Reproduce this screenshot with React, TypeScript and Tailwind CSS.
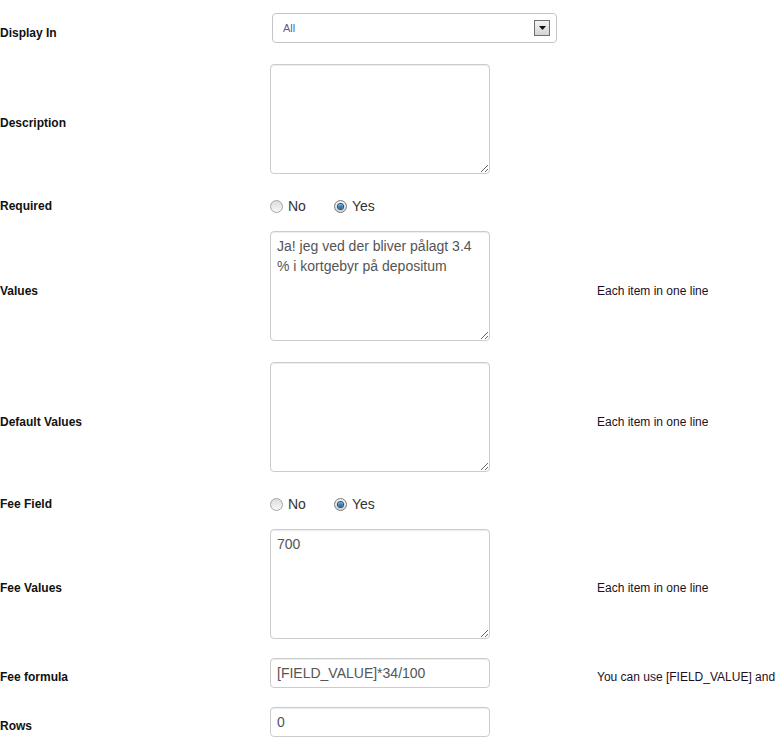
import type { ReactNode } from "react";

const font = { fontFamily: '"Liberation Sans", Arial, sans-serif' };

function Radio({ checked, label }: { checked?: boolean; label: string }) {
  return (
    <label className="flex items-center gap-[5px] text-[14px] text-[#333]">
      {checked ? (
        <span className="flex h-[13px] w-[13px] items-center justify-center rounded-full border border-[#7a7a7a] bg-gradient-to-b from-[#f2f2f2] to-[#d6d6d6]">
          <span className="h-[5px] w-[5px] rounded-full bg-gradient-to-b from-[#5fb0e6] to-[#1d5f92] ring-1 ring-[#1b4f78]" />
        </span>
      ) : (
        <span className="h-[13px] w-[13px] rounded-full border border-[#a5a5a5] bg-gradient-to-b from-[#dcdcdc] to-[#f7f7f7]" />
      )}
      {label}
    </label>
  );
}

function Row({
  label,
  help,
  children,
  radio,
  pad = "py-[6px]",
}: {
  label: string;
  help?: string;
  children: ReactNode;
  radio?: boolean;
  pad?: string;
}) {
  return (
    <div className={`grid grid-cols-[270px_327px_1fr] items-center ${pad}`}>
      <div className={`text-[12px] font-bold text-[#111] ${radio ? "mb-[4px]" : ""}`}>{label}</div>
      <div>{children}</div>
      <div className="whitespace-nowrap text-[12px] text-[#1c0f24]">{help}</div>
    </div>
  );
}

const boxCls =
  "block w-[220px] rounded-[4px] border border-[#cccccc] bg-white px-[6px] py-[4px] text-[14px] leading-[20px] text-[#555] shadow-[inset_0_1px_1px_rgba(0,0,0,0.075)] outline-none";

export default function App() {
  return (
    <div className="min-h-[753px] w-[775px] overflow-hidden bg-white pt-[7px]" style={font}>
      <Row label="Display In">
        <div className="mb-[9px] ml-[2px] flex h-[30px] w-[285px] items-center justify-between rounded-[4px] border border-[#c4c4c4] bg-white pl-[10px] pr-[6px]">
          <span className="text-[11px] text-[#56609a]">All</span>
          <span className="flex h-[16px] w-[16px] items-center justify-center border border-[#6f6f6f] bg-gradient-to-b from-[#f4f4f4] to-[#d4d4d4]">
            <svg width="7" height="4" viewBox="0 0 7 4">
              <path d="M0 0h7L3.5 4z" fill="#111" />
            </svg>
          </span>
        </div>
      </Row>
      <Row label="Description" pad="pt-[6px] pb-[8px]">
        <textarea className={`${boxCls} mb-[7px] h-[110px]`} style={font} defaultValue="" />
      </Row>
      <Row label="Required" radio pad="pt-[7px] pb-[6px]">
        <div className="mb-[4px] flex h-[20px] items-center gap-[28px]">
          <Radio label="No" />
          <Radio label="Yes" checked />
        </div>
      </Row>
      <Row label="Values" help="Each item in one line" pad="pt-[5px] pb-[6px]">
        <textarea
          className={`${boxCls} mb-[9px] h-[110px]`}
          style={font}
          defaultValue={"Ja! jeg ved der bliver pålagt 3.4 % i kortgebyr på depositum"}
        />
      </Row>
      <Row label="Default Values" help="Each item in one line">
        <textarea className={`${boxCls} mb-[9px] h-[110px]`} style={font} defaultValue="" />
      </Row>
      <Row label="Fee Field" radio pad="pt-[7px] pb-[6px]">
        <div className="mb-[4px] flex h-[20px] items-center gap-[28px]">
          <Radio label="No" />
          <Radio label="Yes" checked />
        </div>
      </Row>
      <Row label="Fee Values" help="Each item in one line" pad="pt-[5px] pb-[6px]">
        <textarea className={`${boxCls} mb-[7px] h-[110px]`} style={font} defaultValue="700" />
      </Row>
      <Row label="Fee formula" help="You can use [FIELD_VALUE] and [RATE] in the formula">
        <input className={`${boxCls} mb-[7px] h-[30px]`} style={font} defaultValue="[FIELD_VALUE]*34/100" />
      </Row>
      <Row label="Rows">
        <input className={`${boxCls} mb-[7px] h-[30px]`} style={font} defaultValue="0" />
      </Row>
    </div>
  );
}
